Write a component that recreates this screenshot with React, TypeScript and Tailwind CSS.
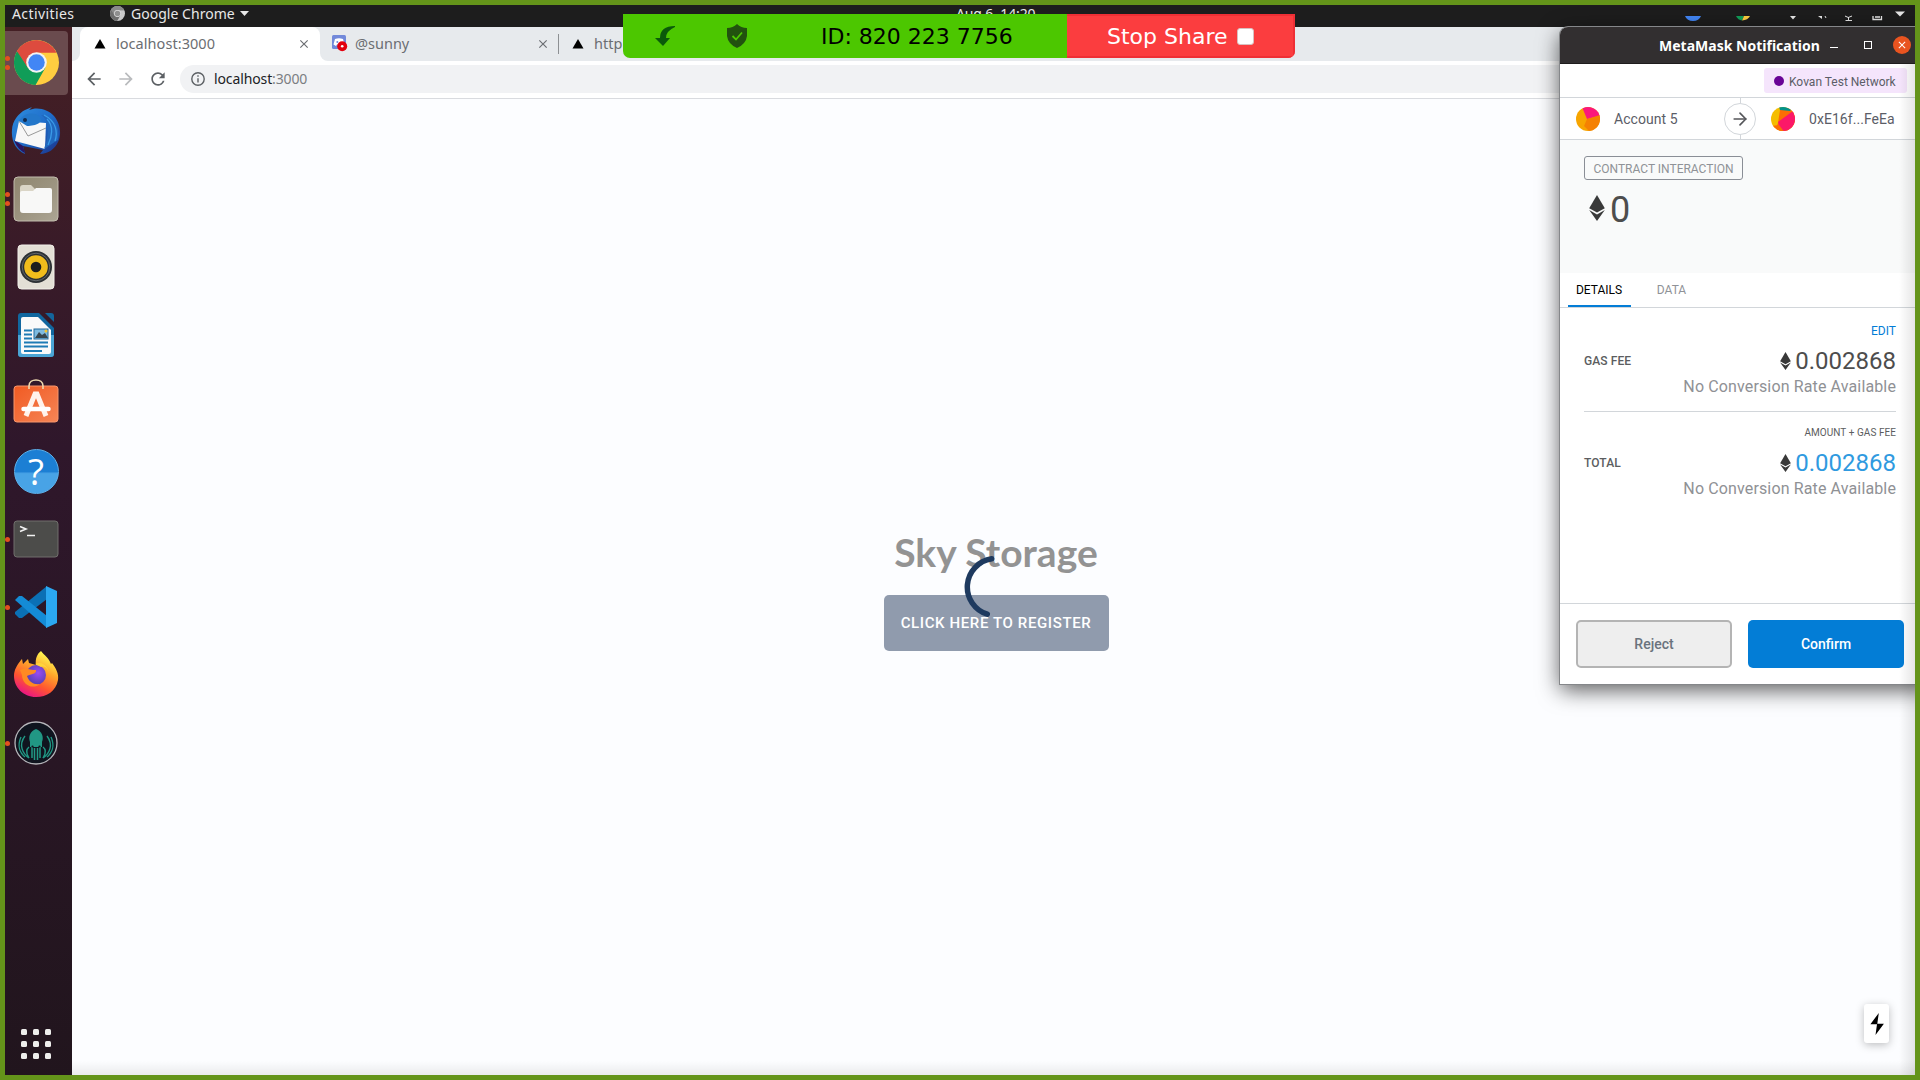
import React from "react";
import { ArrowRight } from "lucide-react";
import { MdArrowBack, MdArrowForward, MdRefresh, MdClose } from "react-icons/md";

const UI = "font-['Noto_Sans',sans-serif]";
const RB = "font-['Roboto',sans-serif]";

function ChromeIcon({ size, gray = false }: { size: number; gray?: boolean }) {
  const c = gray
    ? { r: "#8a8a8a", y: "#c9c9c9", g: "#6e6e6e", b: "#8f8f8f" }
    : { r: "#dd4b3e", y: "#ffcd40", g: "#109d58", b: "#4286f5" };
  return (
    <svg width={size} height={size} viewBox="-24 -24 48 48" className="block">
      <circle r="24" fill={c.y} />
      <path d="M-20.8-12A24 24 0 0 1 20.8-10.6L0-10.8-9.4 5.4Z" fill={c.r} />
      <path d="M-20.8-12A24 24 0 0 0-1 24L9.6 5.2 0 10-9.4 5.4-18-9.5Z" fill={c.g} />
      <path d="M-20.8-12-9.4 5.4-2-10.8H21.2A24 24 0 0 0-20.8-12Z" fill={c.r} />
      <circle r="11" fill={gray ? "#e0e0e0" : "#f3f3f3"} />
      <circle r="8.8" fill={c.b} />
    </svg>
  );
}

function Thunderbird() {
  return (
    <svg width="50" height="50" viewBox="0 0 50 50">
      <defs>
        <linearGradient id="tb" x1="0" y1="0" x2="1" y2="1">
          <stop offset="0" stopColor="#2f8fe0" />
          <stop offset=".5" stopColor="#1f6cc9" />
          <stop offset="1" stopColor="#1b2f86" />
        </linearGradient>
      </defs>
      <path d="M21 1 18 4C27 0 38 4 43 10 49 17 51 28 47 36 44 43 37 48 29 48L32 44 12 40 14 48C5 44 0 35 1 24 1 15 8 7 14 4Z" fill="url(#tb)" />
      <path d="M3 34C6 42 10 45 14 47L12 40Z" fill="#2a1560" />
      <path d="M4 35 8 15 35 17 34 43Z" fill="#f7f7f7" />
      <path d="M8 15 17 30 35 22" fill="none" stroke="#999" strokeWidth="1" />
      <path d="M8 15C12 7 23 5 29 11 33 16 25 20 16 20Z" fill="#2377ca" />
      <path d="M30 9C39 14 38 30 33 43L47 34C50 22 42 9 30 9Z" fill="#2167bd" />
      <path d="M36 13C43 20 41 31 37 39M33 9C45 15 47 26 44 35" fill="none" stroke="#3a9be8" strokeWidth="1.3" />
      <circle cx="14" cy="14" r="2" fill="#102a50" />
    </svg>
  );
}

function Files() {
  return (
    <svg width="46" height="46" viewBox="0 0 46 46">
      <defs>
        <linearGradient id="fl" x1="0" y1="0" x2="1" y2="1">
          <stop offset="0" stopColor="#90876f" />
          <stop offset=".5" stopColor="#9b937f" />
          <stop offset="1" stopColor="#aca594" />
        </linearGradient>
      </defs>
      <rect x="1" y="1" width="44" height="44" rx="4" fill="url(#fl)" stroke="#c2bcae" strokeWidth="1" />
      <path d="M7 15V12Q7 9 10 9H18L22 13H36V18H7Z" fill="#dad5c6" />
      <path d="M7 17Q7 15 9 15H20L23 12H37Q39 12 39 14V34Q39 37 36 37H10Q7 37 7 34Z" fill="#f8f8f7" />
    </svg>
  );
}

function Speaker() {
  return (
    <svg width="38" height="46" viewBox="0 0 38 46">
      <rect x="1" y="1" width="36" height="44" rx="3.5" fill="#e3dfd5" stroke="#f2f0ea" />
      <circle cx="19" cy="23" r="16" fill="#2c3033" />
      <circle cx="19" cy="23" r="13.8" fill="none" stroke="#63686b" />
      <circle cx="19" cy="23" r="11.8" fill="#f1bd1c" />
      <circle cx="19" cy="23" r="5.3" fill="#1e1e1e" />
    </svg>
  );
}

function Writer() {
  return (
    <svg width="38" height="46" viewBox="0 0 38 46">
      <path d="M4 1H22L37 16V42Q37 45 34 45H4Q1 45 1 42V4Q1 1 4 1Z" fill="#11679f" />
      <path d="M1 23H37V42Q37 45 34 45H4Q1 45 1 42Z" fill="#4ba5d5" />
      <path d="M28 1H34Q37 1 37 4V10Z" fill="#13659c" />
      <path d="M6 5H21L34 18V40Q34 42 32 42H6Q4 42 4 40V7Q4 5 6 5Z" fill="#fafafa" />
      <path d="M7 18.5H15M7 22.5H15M7 26.5H15M7 30.5H31M7 34.5H31M7 39H25" stroke="#1d7bb5" strokeWidth="2" />
      <rect x="17" y="17" width="14" height="10" fill="#7ebbe0" stroke="#226b9b" />
      <path d="M18 26 22 20 25 23 28 21 31 26Z" fill="#37474f" />
      <circle cx="29" cy="19" r="1.5" fill="#f4c430" />
    </svg>
  );
}

function Software() {
  return (
    <svg width="46" height="46" viewBox="0 0 46 46">
      <defs>
        <linearGradient id="sw" x1="0" y1="0" x2="1" y2="1">
          <stop offset="0" stopColor="#f15a22" />
          <stop offset="1" stopColor="#f58556" />
        </linearGradient>
      </defs>
      <rect x="1" y="9" width="44" height="36" rx="3" fill="url(#sw)" stroke="#f7966c" />
      <path d="M16 12V9C16 1 30 1 30 9V12" fill="none" stroke="#eed9ae" strokeWidth="1.6" />
      <path d="M13 39 22 17H24L33 39" fill="none" stroke="#fff3ec" strokeWidth="5" />
      <path d="M10.500 32H35.500" stroke="#fff" strokeWidth="4.500" strokeLinecap="round" />
    </svg>
  );
}

function Help() {
  return (
    <div className="grid size-[45px] place-items-center rounded-full border border-[#5cb0ea] bg-linear-to-b from-[#1c7fd4] from-50% to-[#48a3e6] to-55%">
      <span className="font-['Open_Sans',sans-serif] text-[37px] leading-[40px] text-white">?</span>
    </div>
  );
}

function Terminal() {
  return (
    <svg width="46" height="38" viewBox="0 0 46 38">
      <rect x="1" y="1" width="44" height="36" rx="3" fill="#4c4c4a" stroke="#706f6c" />
      <path d="M7 6.500 13 9 7 11.500" fill="none" stroke="#f2f2f2" strokeWidth="1.600" />
      <path d="M14 15.500H22" stroke="#f2f2f2" strokeWidth="1.500" />
    </svg>
  );
}

function VsCode() {
  return (
    <svg width="44" height="44" viewBox="0 0 44 44">
      <path d="M33 1V14L8 33 5 33 1 29V27Z" fill="#0b70b5" />
      <path d="M1 15 5 11H8L33 31V43Z" fill="#148bd6" />
      <path d="M32 1 43 6V38L32 43Z" fill="#2ba8f1" />
    </svg>
  );
}

function Firefox() {
  return (
    <svg width="46" height="48" viewBox="0 0 46 48">
      <defs>
        <linearGradient id="ff" x1=".8" y1="0" x2=".3" y2="1">
          <stop offset=".1" stopColor="#fff44f" />
          <stop offset=".4" stopColor="#ffa42a" />
          <stop offset=".7" stopColor="#ff5530" />
          <stop offset="1" stopColor="#e8118a" />
        </linearGradient>
        <radialGradient id="fp" cx=".6" cy=".4" r=".6">
          <stop offset="0" stopColor="#9a4cf5" />
          <stop offset="1" stopColor="#5540b0" />
        </radialGradient>
      </defs>
      <path d="M28 1C31 5 36 8 38 14L39 13C43 18 46 24 45 30 43 41 34 47 23 47 10 47 1 37 1 26 1 20 4 15 8 10L9 9 10 14 15 9 16 13 23 15C22 9 24 4 28 1Z" fill="url(#ff)" />
      <circle cx="23" cy="25" r="10" fill="url(#fp)" />
      <path d="M22 14C30 10 37 18 36 27 37 20 32 15 28 17Z" fill="#ffd43b" />
      <path d="M7 20C12 17 17 20 23 20 24 24 18 24 14 26 16 32 21 35 27 34 20 40 9 35 9 25Z" fill="#ff8a22" />
    </svg>
  );
}

function Kraken() {
  return (
    <svg width="44" height="44" viewBox="0 0 44 44">
      <circle cx="22" cy="22" r="21" fill="#10141f" stroke="#b5b5ba" strokeWidth="1.300" />
      <path d="M22 8C28 10 30 16 28 21V26H16V21C14 16 16 10 22 8Z" fill="#219784" />
      <path d="M18 25V37M20.500 27V39M23.500 27V39M26 25V37" stroke="#219784" strokeWidth="1.500" />
      <path d="M15 26C10 30 14 35 15 37M29 26C34 30 30 35 29 37M11 15C4 24 9 33 15 37M33 15C40 24 35 33 29 37M7 16C3 25 6 32 11 36M37 16C41 25 38 32 33 36" fill="none" stroke="#219784" strokeWidth="1.400" />
      <circle cx="18.500" cy="25.500" r="1.100" fill="#10141f" />
      <circle cx="25.500" cy="25.500" r="1.100" fill="#10141f" />
    </svg>
  );
}

const dock: { icon: React.ReactNode; dots: number; active?: boolean; lift?: string }[] = [
  { icon: <ChromeIcon size={45} />, dots: 2, active: true, lift: "pb-[2px]" },
  { icon: <Thunderbird />, dots: 0 },
  { icon: <Files />, dots: 2 },
  { icon: <Speaker />, dots: 0 },
  { icon: <Writer />, dots: 0 },
  { icon: <Software />, dots: 0, lift: "pb-[7px]" },
  { icon: <Help />, dots: 0 },
  { icon: <Terminal />, dots: 1 },
  { icon: <VsCode />, dots: 1 },
  { icon: <Firefox />, dots: 0, lift: "pb-[3px]" },
  { icon: <Kraken />, dots: 1 },
];

function Dock() {
  return (
    <aside className="flex w-[72px] shrink-0 flex-col items-center justify-between bg-linear-to-b from-[#451f24] via-[#2f172b] via-40% to-[#21151d] pt-[2px] pb-[21px]">
      <div className="flex w-full flex-col">
        {dock.map((d, i) => (
          <div key={i} className="relative grid h-[68px] w-full place-items-center">
            {d.active && <div className="absolute inset-y-[2px] left-0 right-[4px] rounded-[4px] bg-[#6a4b4e]" />}
            <div className={`relative ${d.lift ?? ""}`}>{d.icon}</div>
            <div className="absolute inset-y-0 left-[4.500px] flex flex-col justify-center gap-[4px]">
              {Array.from({ length: d.dots }).map((_, k) => (
                <i key={k} className="size-[5px] rounded-full bg-[#e2511f]" />
              ))}
            </div>
          </div>
        ))}
      </div>
      <div className="grid grid-cols-3 gap-[6px]">
        {Array.from({ length: 9 }).map((_, k) => (
          <i key={k} className="size-[6px] rounded-[1.500px] bg-[#eeeeec]" />
        ))}
      </div>
    </aside>
  );
}

function Triangle() {
  return (
    <svg width="12" height="10" viewBox="0 0 12 10"><path d="M6 0 11.500 9.500H.500Z" fill="#000" /></svg>
  );
}

function TopBar() {
  return (
    <header className={`relative flex h-[27px] shrink-0 items-start bg-[#1d1d1d] pl-[12px] pt-[5px] text-[14px] leading-[18px] text-[#e8e8e8] ${UI}`}>
      <span className="w-[98px] tracking-[0.400px]">Activities</span>
      <div className="pt-px"><ChromeIcon size={15} gray /></div>
      <span className="ml-[6px] w-[109px] whitespace-nowrap tracking-[0.030px]">Google Chrome</span>
      <svg width="9" height="5" viewBox="0 0 9 5" className="mt-[6px]"><path d="M0 0H9L4.500 5Z" fill="#e8e8e8" /></svg>
      <span className="ml-[707px] whitespace-nowrap tracking-[-0.120px]">Aug 6&nbsp; 14:20</span>
      <svg width="240" height="22" viewBox="1680 5 240 22" className="absolute right-0 top-[5px]">
        <path d="M1685 16H1701Q1699 21 1693 21 1687 21 1685 16Z" fill="#4286f5" />
        <path d="M1736 16H1744L1742 20.500Q1738 20 1736 16Z" fill="#109d58" />
        <path d="M1744 16H1750Q1748 20 1742 20.500Z" fill="#ffcd40" />
        <path d="M1790 16H1796L1793 19.500Z" fill="#e8e8e8" />
        <path d="M1818 16H1822V19Z" fill="#e8e8e8" />
        <path d="M1825 16 1826 18M1845 16Q1848 19 1852 16M1848.500 17V20M1845.500 20.500H1852" stroke="#e8e8e8" fill="none" />
        <path d="M1873 16V19.500H1881.500V16M1875 17H1880" stroke="#e8e8e8" strokeWidth="1.300" fill="none" />
        <path d="M1895 11.500H1905L1900 16.500Z" fill="#e8e8e8" />
      </svg>
    </header>
  );
}

function TabStrip() {
  return (
    <div className={`flex h-[34px] shrink-0 bg-[#e7eaed] text-[14.500px] leading-[32px] text-[#6b6e72] ${UI}`}>
      <div className="w-[8px] bg-white"><div className="h-full rounded-br-[8px] bg-[#e7eaed]" /></div>
      <div className="flex w-[240px] items-center rounded-t-[8px] bg-white pl-[14px]">
        <Triangle />
        <span className="ml-[10px] w-[181px] pb-[2px] tracking-[0.050px]">localhost:3000</span>
        <MdClose className="size-[14px]" />
      </div>
      <div className="w-[240px] bg-white">
        <div className="flex h-full items-center rounded-bl-[8px] bg-[#e7eaed] pl-[12px]">
          <svg width="16" height="17" viewBox="0 0 16 17" className="mb-[2px]">
            <rect width="14" height="14" rx="1.500" fill="#7289da" />
            <path d="M3 4Q7 2.500 11 4L12.500 9.500 10 11 9 9.500H5L4 11 1.500 9.500Z" fill="#fff" />
            <circle cx="5.300" cy="7" r="1" fill="#7289da" />
            <circle cx="10.200" cy="11.300" r="5" fill="#e3000f" />
            <circle cx="10.200" cy="11.300" r="1.300" fill="#fff" />
          </svg>
          <span className="ml-[7px] w-[181px] pb-[2px]">@sunny</span>
          <MdClose className="size-[14px]" />
          <div className="ml-[8px] h-[20px] w-px bg-[#8d9093]" />
        </div>
      </div>
      <div className="flex items-center pl-[12px]">
        <Triangle />
        <span className="ml-[10px] pb-[2px]">http</span>
      </div>
    </div>
  );
}

function Toolbar() {
  return (
    <div className="flex h-[38px] shrink-0 items-start border-b border-[#d9dbdf] bg-white pl-[12px] text-[#5c6064]">
      <div className="flex h-[35px] items-center gap-[12px]">
        <MdArrowBack className="size-[20px]" />
        <MdArrowForward className="size-[20px] text-[#b9bbbd]" />
        <MdRefresh className="size-[20px]" />
      </div>
      <div className={`ml-[12px] mt-[4px] flex h-[28px] flex-1 items-center rounded-l-full bg-[#f1f2f4] pl-[11px] text-[14px] text-[#7b7e82] ${UI}`}>
        <svg width="14" height="14" viewBox="0 0 14 14" fill="none" stroke="#5c6064" strokeWidth="1.400">
          <circle cx="7" cy="7" r="6.200" /><path d="M7 6.200V10.500M7 3.300V4.800" />
        </svg>
        <span className="ml-[9px] pb-[2px] tracking-[-0.120px]"><span className="text-[#202124]">localhost</span>:3000</span>
      </div>
    </div>
  );
}

function Page() {
  return (
    <main className="relative flex flex-1 flex-col items-center bg-[#fcfdff] pt-[428px]">
      <h1 className="font-['Lato',sans-serif] text-[39px] font-bold leading-[50px] text-[#939393]">Sky Storage</h1>
      <button className={`mt-[18px] h-[56px] w-[225px] rounded-[5px] bg-[#909bad] text-[15px] font-medium tracking-[0.620px] whitespace-nowrap text-white ${RB}`}>
        CLICK HERE TO REGISTER
      </button>
      <svg width="64" height="64" viewBox="-32 -32 64 64" className="absolute left-[892px] top-[456px]">
        <path d="M-4.300-28.200A28.500 28.500 0 0 0-8.700 27.200" fill="none" stroke="#1e3a5f" strokeWidth="5.500" strokeLinecap="round" />
      </svg>
      <div className="absolute bottom-[37px] left-[1792px] grid h-[39px] w-[25px] place-items-center rounded-[3px] bg-white shadow-[0_2px_8px_rgba(0,0,0,.25)]">
        <svg width="18" height="24" viewBox="0 0 60 80"><path d="M36 3 30.740 41H8L36 3ZM25 77 30.260 39H53L25 77Z" fill="#000" /></svg>
      </div>
    </main>
  );
}

function Eth({ w, h }: { w: number; h: number }) {
  return (
    <svg width={w} height={h} viewBox="0 0 16 26" preserveAspectRatio="none" fill="#393939">
      <path d="M8 0 15.800 13.200 8 17.600.200 13.200Z" />
      <path d="M.200 15 8 19.600 15.800 15 8 26Z" />
    </svg>
  );
}

function Identicon({ second = false }: { second?: boolean }) {
  return second ? (
    <svg width="24" height="24" viewBox="0 0 24 24">
      <clipPath id="i2"><circle cx="12" cy="12" r="12" /></clipPath>
      <g clipPath="url(#i2)">
        <rect width="24" height="24" fill="#f5bd00" />
        <path d="M9 3 24 0V24H4L7 16Z" fill="#fc6e04" />
        <path d="M8 0H22L19 4 9 3Z" fill="#03928b" />
        <path d="M7 15 22 4 26 14 17 26 9 22Z" fill="#fb1868" />
        <path d="M0 19 8 18 14 26H0Z" fill="#fc6e04" />
      </g>
    </svg>
  ) : (
    <svg width="24" height="24" viewBox="0 0 24 24">
      <clipPath id="i1"><circle cx="12" cy="12" r="12" /></clipPath>
      <g clipPath="url(#i1)">
        <rect width="24" height="24" fill="#f7a500" />
        <path d="M6 0H24V9L11 12Z" fill="#fb187b" />
        <path d="M11 12 24 8V24H13L8 19Z" fill="#f58102" />
      </g>
    </svg>
  );
}

function FeeRow({ top, label, color, topClass }: { top: string; label: string; color: string; topClass: string }) {
  return (
    <div className="flex items-center justify-between">
      <span className="pt-[2px] text-[12px] font-medium tracking-[0.080px] text-[#5b5d60]">{label}</span>
      <div className="flex flex-col items-end">
        <span className={topClass}>{top}</span>
        <div className={`flex h-[33px] items-center gap-[4px] text-[24px] leading-[33px] ${color}`}>
          <Eth w={11} h={18} />
          <span className="pt-px">0.002868</span>
        </div>
        <span className="h-[21px] text-[16px] leading-[20px] tracking-[0.130px] text-[#8f9195]">No Conversion Rate Available</span>
      </div>
    </div>
  );
}

function Popup() {
  return (
    <section className={`absolute left-[1560px] top-[27px] flex h-[657px] w-[372px] flex-col rounded-t-[8px] bg-white shadow-[0_0_0_1px_#85878a,0_6px_22px_rgba(0,0,0,.65)] ${RB}`}>
      <div className={`flex h-[37px] shrink-0 items-center rounded-t-[8px] border-b border-[#1f1d1d] bg-[#322f30] pl-[99px] text-white ${UI}`}>
        <span className="w-[171px] whitespace-nowrap text-[14px] font-bold tracking-[0.010px]">MetaMask Notification</span>
        <span className="mt-[5px] h-px w-[8px] bg-white" />
        <span className="ml-[26px] size-[8px] border border-white" />
        <span className="ml-[21px] grid size-[18px] place-items-center rounded-full bg-[#e95420]"><MdClose className="size-[12px]" /></span>
      </div>
      <div className="flex h-[34px] shrink-0 border-b border-[#d2d6da] pl-[204px] pt-[4px]">
        <div className="flex h-[25px] w-[143px] items-center gap-[5px] rounded-[3px] bg-[#f5e5fc] pl-[10px] text-[12px] text-[#5b5d67]">
          <i className="size-[10px] rounded-full bg-[#690496]" />
          <span className="whitespace-nowrap pt-[2px]">Kovan Test Network</span>
        </div>
      </div>
      <div className="flex h-[42px] shrink-0 items-center border-b border-[#d2d6da] pl-[16px] text-[14px] text-[#5b5d67]">
        <Identicon />
        <span className="ml-[14px] w-[110px] pt-[2px] tracking-[0.050px]">Account 5</span>
        <div className="flex h-full w-[32px] flex-col items-center">
          <i className="h-[5px] w-px bg-[#d2d6da]" />
          <div className="grid size-[32px] shrink-0 place-items-center rounded-full border border-[#d2d6da]"><ArrowRight className="size-[20px] text-[#55565a]" /></div>
          <i className="h-[5px] w-px bg-[#d2d6da]" />
        </div>
        <div className="ml-[15px] h-[24px]"><Identicon second /></div>
        <span className="ml-[14px] pt-[2px] tracking-[0.050px]">0xE16f...FeEa</span>
      </div>
      <div className="flex h-[133px] shrink-0 flex-col items-start bg-[#f9fafa] pl-[24px] pt-[16px]">
        <span className="h-[24px] w-[159px] rounded-[3px] border border-[#8a8e96] text-center text-[12px] leading-[24px] text-[#8f9297]">CONTRACT INTERACTION</span>
        <div className="mt-[7px] flex h-[44px] items-center gap-[5px] pl-[5px] text-[36px] leading-[44px] text-[#4d4d4d]">
          <div className="-mt-[3px]"><Eth w={16} h={26} /></div>
          <span className="pt-[2px]">0</span>
        </div>
      </div>
      <div className="flex h-[35px] shrink-0 border-b border-[#d2d6da] pl-[8px] text-center text-[12px] leading-[35px]">
        <span className="h-[34px] w-[63px] border-b-2 border-[#037dd6] pr-px text-black">DETAILS</span>
        <span className="ml-[17px] w-[47px] text-[#8f9297]">DATA</span>
      </div>
      <div className="flex h-[295px] w-[336px] shrink-0 flex-col pl-[24px] pt-[14px]">
        <FeeRow top="EDIT" topClass="h-[22px] text-[12px] leading-[18px] text-[#037dd6]" label="GAS FEE" color="text-[#4d4d4d]" />
        <div className="mt-[13px] h-px bg-[#d2d6da]" />
        <div className="pt-[11px]">
          <FeeRow top="AMOUNT + GAS FEE" topClass="h-[23px] text-[10px] leading-[20px] tracking-[0.060px] text-[#5b5d60]" label="TOTAL" color="text-[#2f9ae0]" />
        </div>
      </div>
      <div className="flex gap-[16px] border-t border-[#d2d6da] pl-[16px] pt-[16px] text-[14px] font-medium">
        <button className="h-[48px] w-[156px] rounded-[5px] border-2 border-[#b4b4b4] bg-[#eee] text-[#6a737d]">Reject</button>
        <button className="h-[48px] w-[156px] rounded-[5px] bg-[#037dd6] text-white">Confirm</button>
      </div>
    </section>
  );
}

function ShareBar() {
  return (
    <div className="absolute left-[623px] top-[14px] flex h-[44px] w-[672px] overflow-hidden rounded-b-[7px] font-['DejaVu_Sans',sans-serif] text-[22px] leading-[44px]">
      <div className="flex w-[444px] items-center bg-[#4cc700]">
        <svg width="22" height="22" viewBox="0 0 22 22" className="ml-[31px]"><path d="M21 1Q6 1 6 13H1L9 21 16 13H12Q12 6 21 2Z" fill="#0a5a0a" /></svg>
        <svg width="22" height="24" viewBox="0 0 22 24" className="ml-[50px]">
          <path d="M11 0Q15 4 21 4V12Q20 20 11 24 2 20 1 12V4Q7 4 11 0Z" fill="#22520f" />
          <path d="M6.500 12 10 15.500 16 8.500" fill="none" stroke="#4cc700" strokeWidth="1.800" />
        </svg>
        <span className="ml-[73px] whitespace-nowrap pt-[2px] text-black">ID: 820 223 7756</span>
      </div>
      <div className="flex flex-1 items-center border-2 border-l-0 border-[#ef2f35] bg-[#fb3d3f] pl-[40px] text-white">
        <span className="whitespace-nowrap pt-[2px]">Stop Share</span>
        <i className="ml-[9px] size-[17px] rounded-[3px] border border-[#d8c0c0] bg-white" />
      </div>
    </div>
  );
}

export default function App() {
  return (
    <div className="relative flex h-[1080px] w-[1920px] flex-col overflow-hidden bg-[#1d1d1d]">
      <TopBar />
      <div className="flex min-h-0 flex-1">
        <Dock />
        <div className="flex min-w-0 flex-1 flex-col">
          <TabStrip />
          <Toolbar />
          <Page />
        </div>
      </div>
      <Popup />
      <div className="absolute bottom-[5px] right-[5px] top-[64px] w-[16px] bg-linear-to-r from-transparent to-black/10" />
      <div className="absolute bottom-[5px] left-[72px] right-[5px] h-[14px] bg-linear-to-b from-transparent to-black/7" />
      <ShareBar />
      <div className="pointer-events-none absolute inset-0 border-[5px] border-[#64941a]" />
    </div>
  );
}
